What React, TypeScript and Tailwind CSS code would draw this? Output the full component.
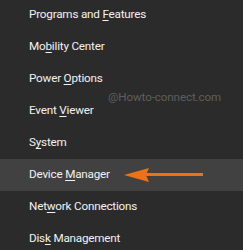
const items: { pre: string; key: string; post: string }[] = [
  { pre: "Programs and ", key: "F", post: "eatures" },
  { pre: "Mo", key: "b", post: "ility Center" },
  { pre: "Power ", key: "O", post: "ptions" },
  { pre: "Event ", key: "V", post: "iewer" },
  { pre: "S", key: "y", post: "stem" },
  { pre: "Device ", key: "M", post: "anager" },
  { pre: "Net", key: "w", post: "ork Connections" },
  { pre: "Dis", key: "k", post: " Management" },
];

export default function App() {
  return (
    <div className="w-[243px] h-[250px] bg-[#2b2b2b] overflow-hidden relative font-['Roboto',sans-serif]">
      <div className="flex flex-col -mt-[1px]">
        {items.map((it, i) => (
          <div
            key={i}
            className={`h-[32px] flex items-center pl-[29px] text-[11.7px] tracking-[-0.2px] text-[#f2f2f2] ${i === 5 ? "bg-[#414141]" : ""}`}
          >
            <span>
              {it.pre}
              <span className="underline underline-offset-2">{it.key}</span>
              {it.post}
            </span>
          </div>
        ))}
      </div>

      {/* watermark */}
      <div className="absolute left-[108px] top-[89px] text-[11.6px] tracking-[-0.1px] text-[#5e5e5e]">@Howto-connect.com</div>

      {/* arrow */}
      <svg className="absolute left-0 top-0" width="243" height="250">
        <line x1="145" y1="174.5" x2="203" y2="174.5" stroke="#f07014" strokeWidth="3" />
        <polygon points="124,175 149,168 146,175 149,182" fill="#f07014" />
      </svg>
    </div>
  );
}
